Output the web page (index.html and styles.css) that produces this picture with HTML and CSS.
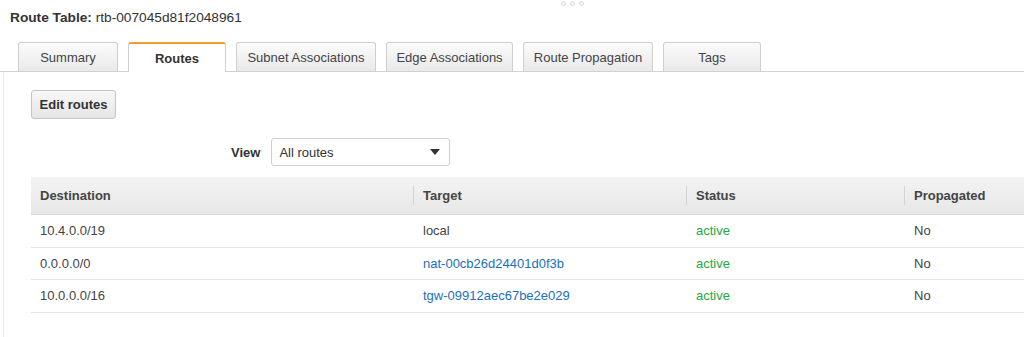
FILE: index.html
```html
<!DOCTYPE html>
<html>
<head>
<meta charset="utf-8">
<link rel="stylesheet" href="styles.css">
</head>
<body>
<div class="grip"><span></span><span></span><span></span></div>
<div class="title"><b>Route Table:</b> rtb-007045d81f2048961</div>
<div class="tabs">
  <div class="tab w-summary">Summary</div>
  <div class="tab active w-routes">Routes</div>
  <div class="tab w-subnet">Subnet Associations</div>
  <div class="tab w-edge">Edge Associations</div>
  <div class="tab w-prop">Route Propagation</div>
  <div class="tab w-tags">Tags</div>
</div>
<div class="panel">
  <div class="content">
    <button class="btn">Edit routes</button>
    <div class="view-row">
      <span class="view-label">View</span>
      <div class="select"><span>All routes</span><span class="caret"></span></div>
    </div>
    <table class="routes">
      <colgroup><col class="c1"><col class="c2"><col class="c3"><col class="c4"></colgroup>
      <thead>
        <tr><th>Destination</th><th><span class="div"></span>Target</th><th><span class="div"></span>Status</th><th><span class="div"></span>Propagated</th></tr>
      </thead>
      <tbody>
        <tr><td>10.4.0.0/19</td><td>local</td><td class="ok">active</td><td>No</td></tr>
        <tr><td>0.0.0.0/0</td><td><a class="link">nat-00cb26d24401d0f3b</a></td><td class="ok">active</td><td>No</td></tr>
        <tr><td>10.0.0.0/16</td><td><a class="link">tgw-09912aec67be2e029</a></td><td class="ok">active</td><td>No</td></tr>
      </tbody>
    </table>
  </div>
</div>
</body>
</html>
```
FILE: styles.css
```css
html, body {
  margin: 0;
  padding: 0;
  background: #fff;
  overflow: hidden;
}
body {
  font-family: "Liberation Sans", Arial, sans-serif;
  font-size: 13px;
  color: #444;
  position: relative;
  width: 1024px;
  height: 337px;
}
.grip {
  position: absolute;
  left: 561px;
  top: 1px;
  display: flex;
  gap: 4px;
}
.grip span {
  width: 3px;
  height: 3px;
  border: 1px solid #d6d6d6;
  border-radius: 50%;
}
.title {
  padding: 10px 0 0 10px;
  height: 32px;
  box-sizing: border-box;
  line-height: 15px;
  font-size: 13.7px;
  color: #333;
}
.title b {
  color: #333;
}
.tabs {
  display: flex;
  align-items: flex-end;
  gap: 10px;
  padding-left: 18px;
  margin-top: 10px;
  height: 29px;
  border-bottom: 1px solid #d0d0d0;
}
.tab {
  height: 29px;
  box-sizing: border-box;
  border: 1px solid #cfcfcf;
  border-bottom: none;
  border-radius: 3px 3px 0 0;
  background: linear-gradient(#fbfbfb, #e9e9e9);
  display: flex;
  align-items: center;
  justify-content: center;
  color: #444;
  padding-top: 1px;
}
.tab.active {
  background: #fff;
  border-top: 2px solid #f39b2c;
  font-weight: bold;
  color: #333;
  height: 30px;
  margin-bottom: -1px;
  padding-top: 0;
}
.w-summary { width: 100px; }
.w-routes { width: 98px; }
.w-subnet { width: 140px; }
.w-edge { width: 127px; }
.w-prop { width: 130px; }
.w-tags { width: 98px; }
.panel {
  margin-left: 3px;
  border-left: 1px solid #ececec;
  height: 266px;
}
.content {
  padding: 18px 0 0 27px;
}
.btn {
  display: block;
  width: 85px;
  height: 29px;
  font-family: inherit;
  font-size: 13px;
  font-weight: bold;
  color: #333;
  border: 1px solid #c6c6c6;
  border-radius: 3px;
  background: linear-gradient(#f8f8f8, #e5e5e5);
  padding: 0;
}
.view-row {
  display: flex;
  align-items: center;
  gap: 11px;
  margin-top: 19px;
  padding-left: 200px;
}
.view-label {
  font-weight: bold;
  color: #333;
}
.select {
  width: 179px;
  height: 28px;
  box-sizing: border-box;
  border: 1px solid #cfcfcf;
  border-radius: 3px;
  display: flex;
  align-items: center;
  justify-content: space-between;
  padding: 0 9px 0 7px;
  color: #333;
}
.caret {
  width: 0;
  height: 0;
  border-left: 5px solid transparent;
  border-right: 5px solid transparent;
  border-top: 6px solid #333;
}
.routes {
  margin-top: 11px;
  border-collapse: collapse;
  table-layout: fixed;
  width: 993px;
}
.c1 { width: 382px; }
.c2 { width: 273px; }
.c3 { width: 218px; }
.c4 { width: 120px; }
.routes th {
  height: 37px;
  text-align: left;
  font-weight: bold;
  color: #444;
  background: linear-gradient(#f3f3f3, #e7e7e7);
  border-bottom: 1px solid #dadada;
  padding: 0 0 0 9px;
  position: relative;
}
.routes th + th {
  padding-left: 10px;
}
.div {
  position: absolute;
  left: 0;
  top: 9px;
  height: 19px;
  border-left: 1px solid #d4d4d4;
}
.routes td {
  height: 31.5px;
  padding: 0 0 0 9px;
  border-bottom: 1px solid #e3e3e3;
  color: #444;
}
.routes td + td {
  padding-left: 10px;
}
.ok {
  color: #25a83c !important;
}
.link {
  color: #1a6fc0;
  text-decoration: none;
}
```
